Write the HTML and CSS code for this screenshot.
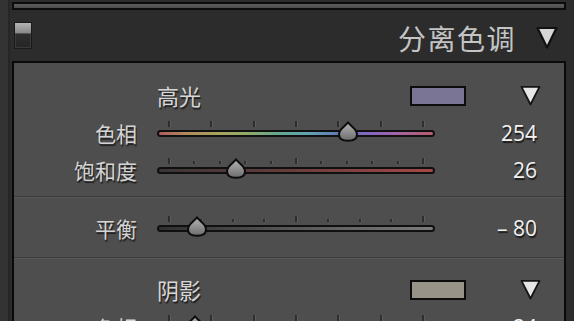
FILE: index.html
```html
<!DOCTYPE html>
<html lang="zh">
<head>
<meta charset="utf-8">
<title>分离色调</title>
<link rel="stylesheet" href="styles.css">
</head>
<body>
<svg class="defs" width="0" height="0" aria-hidden="true">
  <defs>
    <linearGradient id="thumbGrad" x1="0" y1="0" x2="0" y2="1">
      <stop offset="0" stop-color="#b4b4b4"/>
      <stop offset="1" stop-color="#6c6c6c"/>
    </linearGradient>
  </defs>
</svg>
<div class="page">
  <div class="edge"></div>
  <div class="main">
    <div class="topbar"></div>
    <div class="header">
      <div class="toggle"><span class="toggle-on"></span><span class="toggle-off"></span></div>
      <div class="title">分离色调</div>
      <svg class="tri tri-big" width="22" height="23" viewBox="0 0 22 23"><polygon points="1.5,2 20.5,2 11,21.5" fill="#d6d6d6" stroke="#111" stroke-width="2.2" stroke-linejoin="round"/></svg>
    </div>
    <div class="panel">
      <div class="sec-head">
        <div class="sec-label">高光</div>
        <div class="swatch swatch-high"></div>
        <svg class="tri" width="21" height="21" viewBox="0 0 21 21"><polygon points="1.5,1.8 19.5,1.8 10.5,19.5" fill="#e6e6e6" stroke="#151515" stroke-width="1.8" stroke-linejoin="round"/></svg>
      </div>
      <div class="row">
        <div class="label">色相</div>
        <div class="slider">
          <div class="ticks"><i class="major"></i><i class="major"></i><i class="major"></i><i class="major"></i><i class="major"></i><i class="major"></i><i class="major"></i></div>
          <div class="track hue">
            <span class="thumb" style="left:69%"><svg width="22" height="21" viewBox="0 0 22 21"><path d="M11 1.5 C13.5 5 20 8 20 13.2 C20 17.4 16.5 19.8 11 19.8 C5.5 19.8 2 17.4 2 13.2 C2 8 8.5 5 11 1.5 Z" fill="url(#thumbGrad)" stroke="#0c0c0c" stroke-width="2"/></svg></span>
          </div>
        </div>
        <div class="value">254</div>
      </div>
      <div class="row">
        <div class="label">饱和度</div>
        <div class="slider">
          <div class="ticks"><i class="major"></i><i></i><i></i><i></i><i></i><i class="major"></i><i></i><i></i><i></i><i></i><i class="major"></i></div>
          <div class="track sat">
            <span class="thumb" style="left:28%"><svg width="22" height="21" viewBox="0 0 22 21"><path d="M11 1.5 C13.5 5 20 8 20 13.2 C20 17.4 16.5 19.8 11 19.8 C5.5 19.8 2 17.4 2 13.2 C2 8 8.5 5 11 1.5 Z" fill="url(#thumbGrad)" stroke="#0c0c0c" stroke-width="2"/></svg></span>
          </div>
        </div>
        <div class="value">26</div>
      </div>
      <div class="sep sep-first"></div>
      <div class="row row-balance">
        <div class="label">平衡</div>
        <div class="slider">
          <div class="ticks"><i class="major"></i><i></i><i></i><i></i><i class="major"></i><i></i><i></i><i></i><i class="major"></i></div>
          <div class="track bal">
            <span class="thumb" style="left:13.7%"><svg width="22" height="21" viewBox="0 0 22 21"><path d="M11 1.5 C13.5 5 20 8 20 13.2 C20 17.4 16.5 19.8 11 19.8 C5.5 19.8 2 17.4 2 13.2 C2 8 8.5 5 11 1.5 Z" fill="url(#thumbGrad)" stroke="#0c0c0c" stroke-width="2"/></svg></span>
          </div>
        </div>
        <div class="value">– 80</div>
      </div>
      <div class="sep sep-second"></div>
      <div class="sec-head">
        <div class="sec-label">阴影</div>
        <div class="swatch swatch-shadow"></div>
        <svg class="tri" width="21" height="21" viewBox="0 0 21 21"><polygon points="1.5,1.8 19.5,1.8 10.5,19.5" fill="#e6e6e6" stroke="#151515" stroke-width="1.8" stroke-linejoin="round"/></svg>
      </div>
      <div class="row">
        <div class="label">色相</div>
        <div class="slider">
          <div class="ticks"><i class="major"></i><i class="major"></i><i class="major"></i><i class="major"></i><i class="major"></i><i class="major"></i><i class="major"></i></div>
          <div class="track hue">
            <span class="thumb" style="left:13%"><svg width="22" height="21" viewBox="0 0 22 21"><path d="M11 1.5 C13.5 5 20 8 20 13.2 C20 17.4 16.5 19.8 11 19.8 C5.5 19.8 2 17.4 2 13.2 C2 8 8.5 5 11 1.5 Z" fill="url(#thumbGrad)" stroke="#0c0c0c" stroke-width="2"/></svg></span>
          </div>
        </div>
        <div class="value">24</div>
      </div>
    </div>
  </div>
</div>
</body>
</html>
```

FILE: styles.css
```css
* { box-sizing: border-box; }
html, body { margin: 0; padding: 0; }
body {
  background: #2c2c2c;
  font-family: "Noto Sans CJK SC", "Noto Sans", sans-serif;
  overflow: hidden;
}
.defs { position: absolute; width: 0; height: 0; }
.page {
  display: flex;
  width: 574px;
  height: 321px;
  overflow: hidden;
}
.edge {
  width: 10px;
  flex: none;
  background: #333333;
  border-right: 2px solid #262626;
}
.main {
  flex: 1;
  display: flex;
  flex-direction: column;
  min-width: 0;
}
.topbar {
  margin: 2px 8px 0 2px;
  height: 8px;
  border: 2px solid #0c0c0c;
  background: linear-gradient(#5e5e5e, #4c4c4c);
}
.header {
  height: 51px;
  display: flex;
  align-items: center;
}
.toggle {
  margin-left: 4px;
  width: 18px;
  height: 27px;
  border: 1px solid #1a1a1a;
  display: flex;
  flex-direction: column;
  background: #262626;
}
.toggle-on {
  height: 11px;
  background: linear-gradient(#b4b4b4, #888888);
  border-bottom: 1px solid #555;
}
.toggle-off {
  flex: 1;
  background: linear-gradient(#2e2e2e, #262626);
  border: 1px solid #3a3a3a;
  border-top: none;
}
.title {
  margin-left: auto;
  padding-top: 4px;
  font-size: 28px;
  line-height: 1;
  color: #c4c4c4;
  letter-spacing: 1.5px;
}
.tri { display: block; flex: none; }
.tri-big { margin-left: 20px; margin-right: 16px; margin-top: 4px; }
.panel {
  flex: 1;
  margin: 0 8px 0 2px;
  border: 2px solid #0a0a0a;
  border-bottom: none;
  background: #4e4e4e;
  overflow: hidden;
}
.sec-head {
  height: 40px;
  margin-top: 12px;
  display: flex;
  align-items: center;
  padding-left: 143px;
  padding-right: 23px;
}
.sep-second + .sec-head { margin-top: 10px; }
.sec-label {
  flex: 1;
  font-size: 22px;
  line-height: 1;
  color: #d6d6d6;
  text-shadow: 1px 2px 1px #1e1e1e;
}
.swatch {
  width: 56px;
  height: 20px;
  border: 2px solid #0c0c0c;
  margin-right: 54px;
  margin-top: 2px;
}
.swatch-high { background: #7b7595; }
.swatch-shadow { background: #979389; }
.row {
  height: 37px;
  display: flex;
  align-items: center;
}
.label {
  width: 123px;
  text-align: right;
  font-size: 21px;
  line-height: 1;
  color: #d4d4d4;
  text-shadow: 1px 2px 1px #1e1e1e;
}
.slider {
  margin-left: 20px;
  width: 278px;
  padding-bottom: 10px;
  display: flex;
  flex-direction: column;
}
.ticks {
  height: 7px;
  margin-bottom: 3px;
  padding: 0 11px;
  display: flex;
  justify-content: space-between;
  align-items: flex-end;
}
.ticks i {
  display: block;
  width: 2px;
  height: 3px;
  background: #2e2e2e;
  box-shadow: 1px 0 0 #5c5c5c;
}
.ticks i.major { height: 6px; }
.track {
  position: relative;
  height: 7px;
  border: 2px solid #101010;
  border-radius: 4px;
}
.hue {
  background: linear-gradient(90deg, #ac5c5e 0%, #b08a5c 10%, #a8a45e 22%, #90aa68 32%, #64a890 44%, #60a4b4 54%, #6278b8 66%, #8466bc 77%, #a464a8 87%, #b45c68 100%);
}
.sat { background: linear-gradient(90deg, #3a3636 0%, #643c3c 45%, #a44848 100%); }
.bal { background: linear-gradient(90deg, #303030 0%, #555555 45%, #7a7a7a 100%); }
.thumb {
  position: absolute;
  top: -11px;
  width: 22px;
  height: 21px;
  transform: translateX(-50%);
}
.thumb svg { display: block; }
.value {
  width: 102px;
  text-align: right;
  font-family: "Open Sans", "Liberation Sans", sans-serif;
  font-size: 21px;
  line-height: 1;
  color: #f2f2f2;
  text-shadow: 1px 2px 1px #1a1a1a;
}
.sep {
  height: 2px;
  border-top: 1px solid #3c3c3c;
  border-bottom: 1px solid #585858;
}
.sep-first { margin-top: 7px; }
.row-balance { margin-top: 12px; }
.sep-second { margin-top: 10px; }
```
